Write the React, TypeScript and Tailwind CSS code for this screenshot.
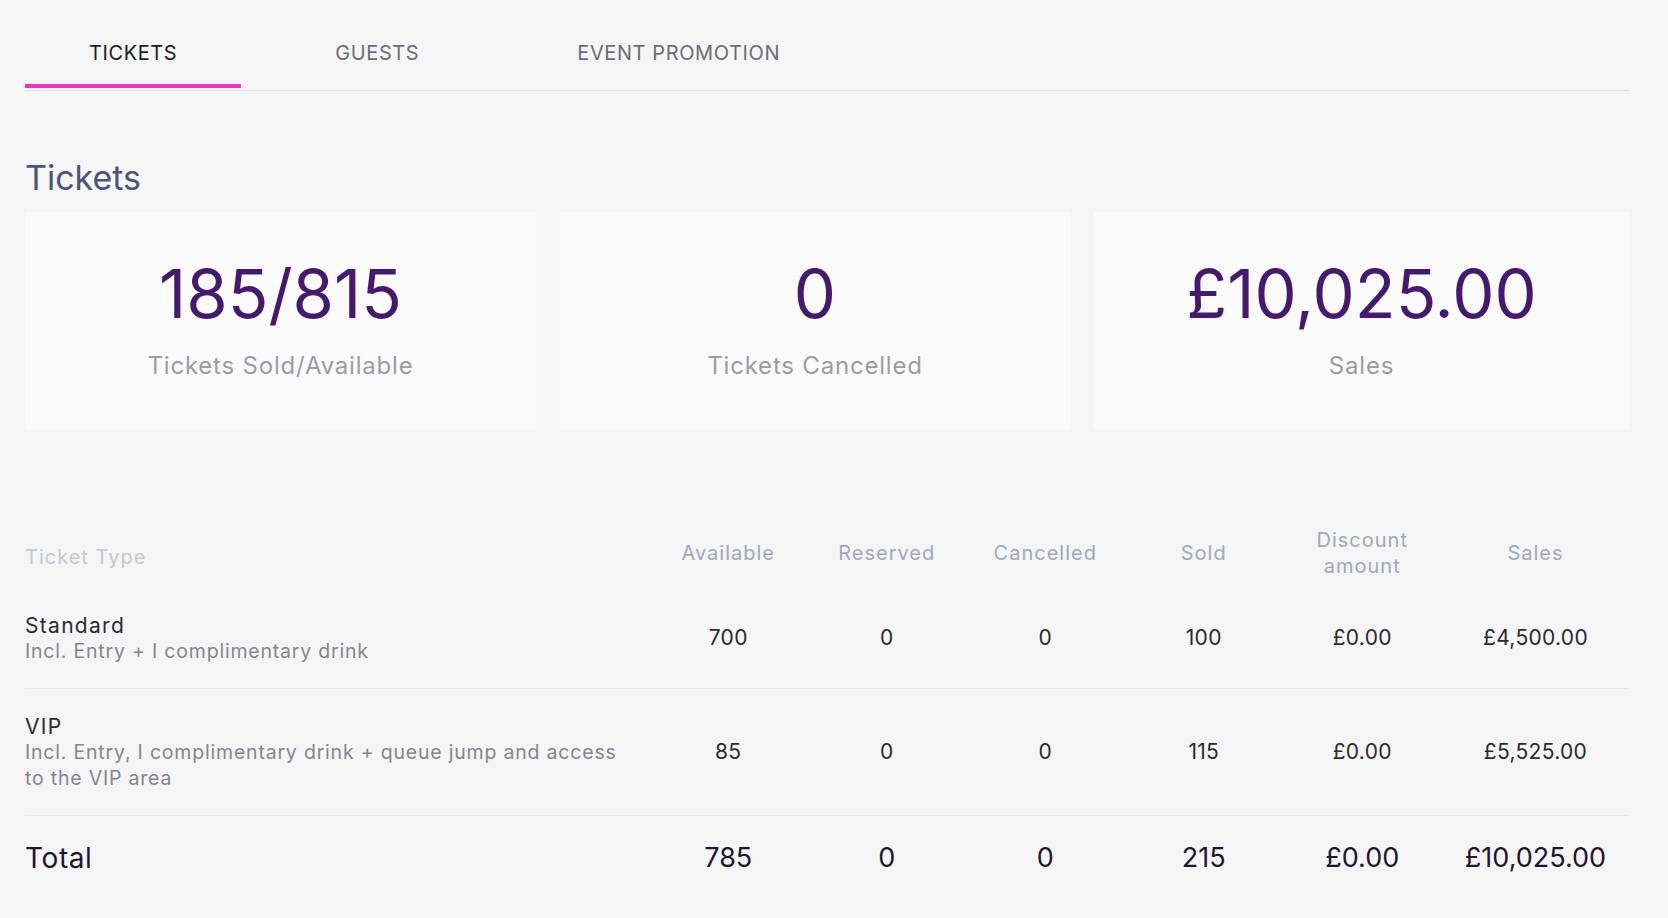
import React from "react";

const font = { fontFamily: "Inter, 'Liberation Sans', sans-serif" };

type Row = {
  name: string;
  desc: React.ReactNode;
  vals: string[];
};

const rows: Row[] = [
  {
    name: "Standard",
    desc: "Incl. Entry + I complimentary drink",
    vals: ["700", "0", "0", "100", "£0.00", "£4,500.00"],
  },
  {
    name: "VIP",
    desc: (
      <>
        Incl. Entry, I complimentary drink + queue jump and access
        <br />
        to the VIP area
      </>
    ),
    vals: ["85", "0", "0", "115", "£0.00", "£5,525.00"],
  },
];

function Cells({ vals, cls }: { vals: string[]; cls: string }) {
  return (
    <>
      {vals.map((v, i) => (
        <div
          key={i}
          className={`${i === 5 ? "w-[188px]" : "w-[158.5px]"} shrink-0 text-center ${cls}`}
        >
          {v}
        </div>
      ))}
    </>
  );
}

export default function App() {
  return (
    <div className="min-h-[918px] w-full bg-[#f5f5f5] pl-[25px] pr-[39px]" style={font}>
      {/* Tabs */}
      <div className="flex h-[91px] gap-[30px] border-b border-[#e3e3e6]">
        {[
          { t: "TICKETS", active: true },
          { t: "GUESTS", active: false },
          { t: "EVENT PROMOTION", active: false },
        ].map((tab) => (
          <div
            key={tab.t}
            className={`relative h-[90px] px-[64px] pt-[41px] text-[20px] leading-[24px] tracking-[0.6px] ${
              tab.active ? "text-[#1c1c22]" : "text-[#6c6c78]"
            }`}
          >
            {tab.t}
            {tab.active && (
              <span className="absolute bottom-[2px] left-0 right-0 h-[4px] bg-[#ee34c0]" />
            )}
          </div>
        ))}
      </div>

      {/* Heading */}
      <h1 className="mt-[67px] text-[34px] leading-[40px] text-[#4b5677]">Tickets</h1>

      {/* Cards */}
      <div className="mt-[14px] flex gap-[23.5px]">
        {[
          { n: "185/815", l: "Tickets Sold/Available", w: "w-[511px]" },
          { n: "0", l: "Tickets Cancelled", w: "w-[511px]" },
          { n: "£10,025.00", l: "Sales", w: "w-[535px]" },
        ].map((c) => (
          <div
            key={c.l}
            className={`${c.w} flex h-[217px] shrink-0 flex-col items-center bg-[#fafafa] pt-[42px]`}
          >
            <div className="text-[67px] leading-[80px] tracking-[0px] text-[#45196b]">{c.n}</div>
            <div className="mt-[17px] text-[24px] leading-[30px] tracking-[0.8px] text-[#9c9ca4]">{c.l}</div>
          </div>
        ))}
      </div>

      {/* Table */}
      <div className="mt-[89px]">
        <div className="flex h-[70px] items-center">
          <div className="w-[624px] shrink-0 pt-[7px] text-[20px] tracking-[1px] text-[#c5c8d4]">Ticket Type</div>
          {["Available", "Reserved", "Cancelled", "Sold", "Discount amount", "Sales"].map((h, i) => (
            <div
              key={h}
              className={`${i === 5 ? "w-[188px]" : "w-[158.5px]"} shrink-0 text-center text-[20px] leading-[26px] tracking-[1px] text-[#a3a6bb]`}
            >
              {h === "Discount amount" ? (
                <>
                  Discount
                  <br />
                  amount
                </>
              ) : (
                h
              )}
            </div>
          ))}
        </div>

        {rows.map((r, idx) => (
          <div
            key={r.name}
            className={`flex items-center border-b border-[#e7e9ef] ${idx === 0 ? "h-[101px]" : "h-[127px]"}`}
          >
            <div className="w-[624px] shrink-0">
              <div className="text-[21px] leading-[25px] tracking-[1.3px] text-[#2a2a32]">{r.name}</div>
              <div className="text-[19.5px] leading-[26px] tracking-[0.8px] text-[#85858f]">{r.desc}</div>
            </div>
            <Cells vals={r.vals} cls="text-[21px] tracking-[0.3px] text-[#2a2a32]" />
          </div>
        ))}

        <div className="flex h-[84px] items-center">
          <div className="w-[624px] shrink-0 text-[28px] tracking-[0.6px] text-[#1d1630]">Total</div>
          <Cells vals={["785", "0", "0", "215", "£0.00", "£10,025.00"]} cls="text-[27px] text-[#1d1630]" />
        </div>
      </div>
    </div>
  );
}
